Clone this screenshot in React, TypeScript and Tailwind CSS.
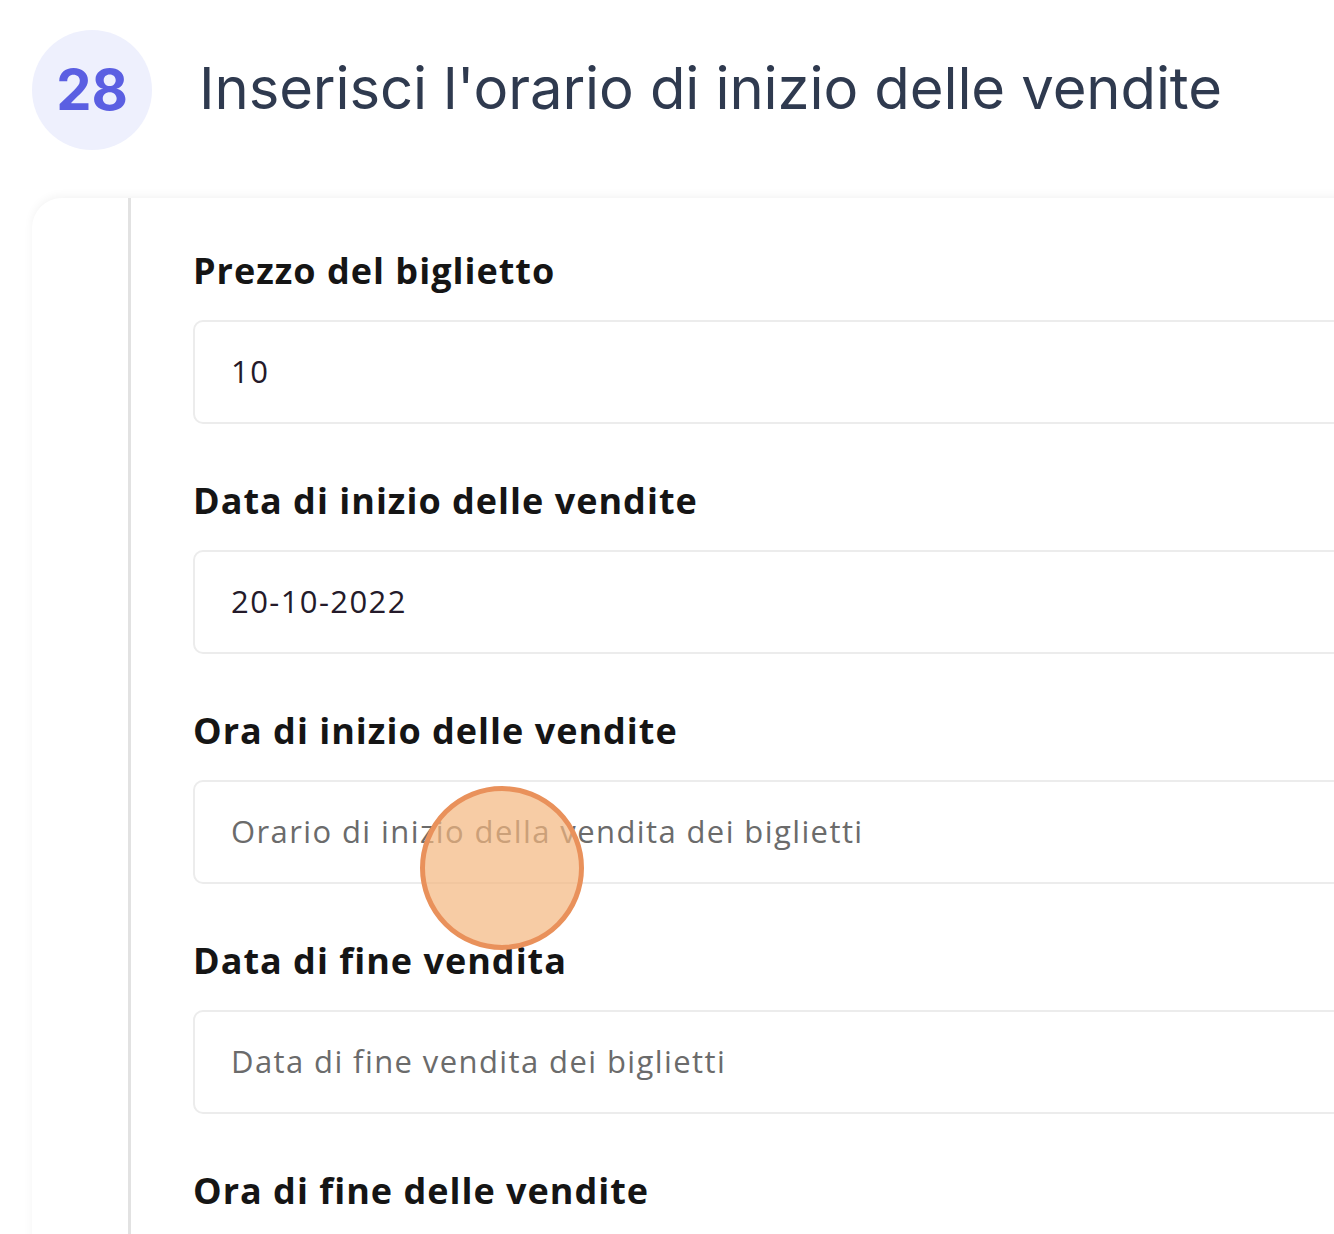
import React from "react";

const fields = [
  { label: "Prezzo del biglietto", value: "10", placeholder: false },
  { label: "Data di inizio delle vendite", value: "20-10-2022", placeholder: false },
  { label: "Ora di inizio delle vendite", value: "Orario di inizio della vendita dei biglietti", placeholder: true },
  { label: "Data di fine vendita", value: "Data di fine vendita dei biglietti", placeholder: true },
];

const App: React.FC = () => {
  return (
    <div className="w-[1334px] h-[1234px] overflow-hidden bg-white relative">
      <div className="flex items-center gap-[47px] pl-8 pt-[30px]">
        <div className="w-[120px] h-[120px] rounded-full bg-[#eef0fd] flex items-center justify-center">
          <span className="text-[56px] font-bold text-[#5b5fe2] font-['Inter',sans-serif] leading-none">28</span>
        </div>
        <h1 className="text-[58px] text-[#2f3a4f] font-['Inter',sans-serif] tracking-[-0.1px] leading-none pb-1">
          Inserisci l'orario di inizio delle vendite
        </h1>
      </div>

      <div className="ml-8 mt-[48px] w-[1400px] rounded-tl-[30px] bg-white shadow-[0_-2px_10px_rgba(0,0,0,0.05)] flex">
        <div className="w-[96px] shrink-0" />
        <div className="w-[3px] bg-[#e2e2e2] shrink-0" />
        <div className="flex-1 pl-[62px] pt-[50px] flex flex-col font-['Open_Sans',sans-serif]">
          {fields.map((f) => (
            <div key={f.label} className="flex flex-col mb-[54px]">
              <label className="text-[36px] font-bold text-[#151515] leading-[46px] tracking-[1px]">{f.label}</label>
              <div className="mt-[26px] h-[104px] border-2 border-[#ececec] rounded-[10px] flex items-center pl-[36px] pb-[2px]">
                <span
                  className={
                    f.placeholder
                      ? "text-[31px] tracking-[1.4px] text-[#6b6b6b]"
                      : "text-[31px] tracking-[1.4px] text-[#241a2a]"
                  }
                >
                  {f.value}
                </span>
              </div>
            </div>
          ))}
          <label className="text-[36px] font-bold text-[#151515] leading-[46px] tracking-[1px]">Ora di fine delle vendite</label>
          <div className="h-[60px]" />
        </div>
      </div>

      <div className="absolute left-[420px] top-[786px] w-[164px] h-[164px] rounded-full border-[5px] border-[#e9915b] bg-[#f4b77f]/70" />
    </div>
  );
};

export default App;
